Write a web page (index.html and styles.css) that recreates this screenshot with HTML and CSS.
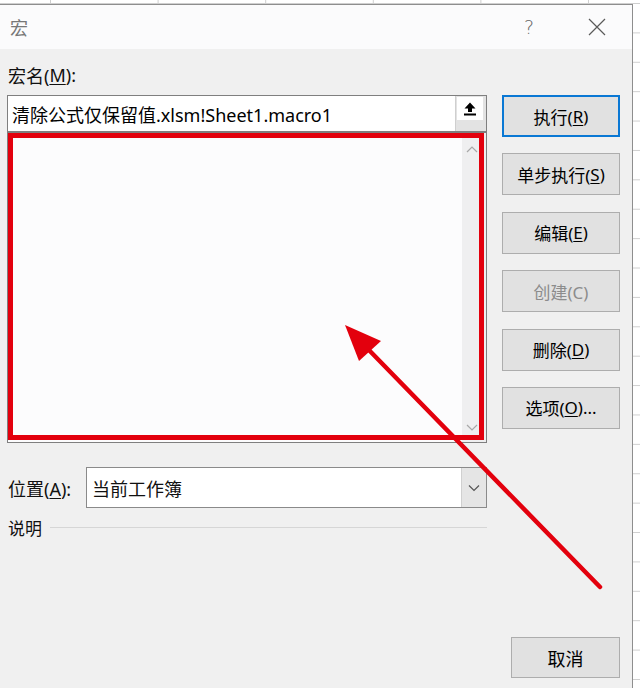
FILE: index.html
```html
<!DOCTYPE html>
<html lang="zh-CN">
<head>
<meta charset="utf-8">
<title>宏</title>
<link rel="stylesheet" href="styles.css">
</head>
<body>
<div class="dialog">
  <div class="titlebar">
    <span class="title">宏</span>
    <span class="help">?</span>
    <svg class="close" width="18" height="18" viewBox="0 0 18 18"><path d="M1 1 L17 17 M17 1 L1 17" stroke="#5a5a5a" stroke-width="1.2" fill="none"/></svg>
  </div>
  <div class="content">
    <div class="top">
      <div class="leftcol">
        <div class="label">宏名(<u>M</u>):</div>
        <div class="field">
          <span class="field-text">清除公式仅保留值.xlsm!Sheet1.macro1</span>
          <div class="upbtn">
            <div class="upicon">
              <svg width="16" height="16" viewBox="0 0 16 16"><path d="M8 1.5 L2.5 7.5 H6 V11 H10 V7.5 H13.5 Z" fill="#000"/><rect x="2" y="12.5" width="12" height="2" fill="#000"/></svg>
            </div>
          </div>
        </div>
        <div class="listbox">
          <div class="scrollbar">
            <svg width="12" height="8" viewBox="0 0 12 8"><path d="M1 7 L6 2 L11 7" stroke="#a8a8a8" stroke-width="1.2" fill="none"/></svg>
            <svg width="12" height="8" viewBox="0 0 12 8"><path d="M1 1 L6 6 L11 1" stroke="#a8a8a8" stroke-width="1.2" fill="none"/></svg>
          </div>
        </div>
        <div class="pos-row">
          <span class="pos-label">位置(<u>A</u>):</span>
          <div class="combo">
            <span class="combo-text">当前工作簿</span>
            <div class="combo-btn">
              <svg width="12" height="8" viewBox="0 0 12 8"><path d="M1 1.5 L6 6.5 L11 1.5" stroke="#555" stroke-width="1.2" fill="none"/></svg>
            </div>
          </div>
        </div>
        <div class="desc-row">
          <span class="desc-label">说明</span>
          <span class="desc-line"></span>
        </div>
      </div>
      <div class="rightcol">
        <div class="btn default">执行(<u>R</u>)</div>
        <div class="btn">单步执行(<u>S</u>)</div>
        <div class="btn">编辑(<u>E</u>)</div>
        <div class="btn disabled">创建(C)</div>
        <div class="btn">删除(<u>D</u>)</div>
        <div class="btn">选项(<u>O</u>)...</div>
      </div>
    </div>
    <div class="footer">
      <div class="btn cancel">取消</div>
    </div>
  </div>
</div>
<svg class="annotation" width="640" height="688" viewBox="0 0 640 688">
  <rect x="10.5" y="135.5" width="471" height="302" fill="none" stroke="#e3000d" stroke-width="5"/>
  <line x1="600" y1="587" x2="366" y2="347" stroke="#e3000d" stroke-width="4.5" stroke-linecap="round"/>
  <polygon points="345,325 381,341 359,361" fill="#e3000d"/>
</svg>
</body>
</html>
```
FILE: styles.css
```css
* { box-sizing: border-box; }
html, body { margin: 0; padding: 0; }
body {
  width: 640px;
  height: 688px;
  overflow: hidden;
  position: relative;
  font-family: "Noto Sans", "Noto Sans CJK SC", sans-serif;
  color: #111;
  background-color: #fff;
  background-image:
    linear-gradient(to right, #cfcfcf 1px, transparent 1px),
    linear-gradient(to bottom, #cfcfcf 1px, transparent 1px);
  background-size: 107.6px 100%, 100% 29.4px;
  background-position: 50px 0, 0 3px;
}
u { text-decoration: underline; text-underline-offset: 2px; text-decoration-thickness: 1px; }
.dialog {
  margin-top: 4px;
  width: 633px;
  height: 684px;
  border-top: 1px solid #8e8e8e;
  border-right: 1px solid #8e8e8e;
  display: flex;
  flex-direction: column;
  background: #f0f0f0;
}
.titlebar {
  height: 44px;
  background: #fbfbfc;
  display: flex;
  align-items: center;
  padding-left: 10px;
  padding-right: 26px;
}
.title { font-size: 18px; color: #777; font-family: "Noto Sans CJK SC", sans-serif; }
.help { margin-left: auto; font-size: 19px; color: #666; font-family: "DejaVu Sans", sans-serif; font-weight: 300; margin-right: 54px; }
.close { display: block; }
.content {
  flex: 1;
  display: flex;
  flex-direction: column;
  padding: 0 12px 10px 7px;
}
.top { display: flex; gap: 15px; }
.leftcol { width: 480px; display: flex; flex-direction: column; }
.label {
  height: 46px;
  padding-top: 6px;
  display: flex;
  align-items: center;
  font-size: 18px;
  padding-left: 1px;
}
.field {
  height: 37px;
  border: 1px solid #7f7f7f;
  background: #fff;
  display: flex;
  align-items: center;
}
.field-text { font-size: 18px; padding-left: 4px; flex: 1; white-space: nowrap; color: #000; }
.upbtn {
  width: 31px;
  align-self: stretch;
  background: #e3e3e3;
  border-left: 1px solid #cfcfcf;
  padding: 1px 1px 0 1px;
}
.upicon {
  width: 26px;
  height: 23px;
  background: #fff;
  display: flex;
  align-items: center;
  justify-content: center;
}
.listbox {
  height: 311px;
  border: 1px solid #7f7f7f;
  background: #fcfcfd;
  display: flex;
  justify-content: flex-end;
}
.scrollbar {
  width: 24px;
  background: #efeff0;
  display: flex;
  flex-direction: column;
  justify-content: space-between;
  align-items: center;
  padding: 12px 4px 10px 0;
}
.scrollbar svg { display: block; }
.pos-row {
  margin-top: 24px;
  display: flex;
  align-items: center;
}
.pos-label { width: 79px; font-size: 18px; padding-left: 1px; }
.combo {
  flex: 1;
  height: 41px;
  border: 1px solid #8a8a8a;
  background: #fff;
  display: flex;
  align-items: center;
}
.combo-text { flex: 1; font-size: 18px; padding-left: 5px; font-family: "Noto Sans CJK SC", sans-serif; }
.combo-btn {
  width: 25px;
  align-self: stretch;
  background: #e5e5e5;
  border-left: 1px solid #d0d0d0;
  display: flex;
  align-items: center;
  justify-content: center;
}
.desc-row {
  margin-top: 8px;
  height: 22px;
  display: flex;
  align-items: center;
}
.desc-label { font-size: 17px; padding-left: 1px; font-family: "Noto Sans CJK SC", sans-serif; }
.desc-line { flex: 1; height: 1px; background: #d6d6d6; margin-left: 8px; }
.rightcol {
  width: 118px;
  padding-top: 46px;
  display: flex;
  flex-direction: column;
  gap: 16.4px;
}
.btn {
  height: 42px;
  background: #e1e1e1;
  border: 1px solid #adadad;
  display: flex;
  align-items: center;
  justify-content: center;
  font-size: 17px;
  color: #000;
  white-space: nowrap;
}
.btn.default { border: 2px solid #0a78d4; }
.btn.disabled { color: #8c8c8c; }
.footer {
  margin-top: auto;
  display: flex;
  justify-content: flex-end;
}
.btn.cancel { width: 109px; height: 41px; font-size: 18px; }
.annotation { position: absolute; left: 0; top: 0; pointer-events: none; }
```
